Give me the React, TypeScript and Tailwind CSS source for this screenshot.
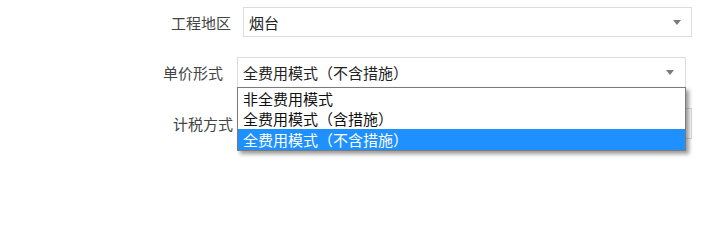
import React from "react";

const Arrow = () => (
  <svg width="8" height="5" viewBox="0 0 8 5" className="shrink-0">
    <path d="M0 0 L8 0 L4 5 Z" fill="#7a7a7a" />
  </svg>
);

export default function App() {
  return (
    <div className="relative w-[725px] h-[208px] bg-white font-['Noto_Sans_CJK_SC',sans-serif] overflow-hidden">
      <div className="flex flex-col pt-[7px]">
        <div className="flex items-center">
          <div className="w-[231px] text-right text-[15px] text-[#444] leading-none">工程地区</div>
          <div className="ml-[12px] w-[449px] h-[30px] border border-[#dcdcdc] flex items-center pl-[5px] pr-[10px]">
            <span className="flex-1 text-[15px] text-[#222] leading-none">烟台</span>
            <Arrow />
          </div>
        </div>
        <div className="flex items-center mt-[20px]">
          <div className="w-[223px] text-right text-[15px] text-[#444] leading-none">单价形式</div>
          <div className="ml-[14px] w-[449px] h-[31px] border border-[#dcdcdc] flex items-center pl-[5px] pr-[11px]">
            <span className="flex-1 text-[15px] text-[#222] leading-none">全费用模式（不含措施）</span>
            <Arrow />
          </div>
        </div>
        <div className="flex items-center mt-[20px]">
          <div className="w-[233px] text-right text-[15px] text-[#444] leading-none">计税方式</div>
          <div className="ml-[10px] w-[449px] h-[31px] border border-[#dcdcdc]" />
        </div>
      </div>
      <div className="absolute top-[87px] left-[237px] w-[449px] border border-[#7a7a7a] bg-white shadow-[3px_3px_4px_rgba(0,0,0,0.4)] flex flex-col text-[15px] leading-none">
        <div className="h-[20px] flex items-center pl-[5px] text-[#111]">非全费用模式</div>
        <div className="h-[21px] flex items-center pl-[5px] text-[#111]">全费用模式（含措施）</div>
        <div className="h-[21px] flex items-center pl-[5px] bg-[#1e90ff] text-white">全费用模式（不含措施）</div>
      </div>
    </div>
  );
}
